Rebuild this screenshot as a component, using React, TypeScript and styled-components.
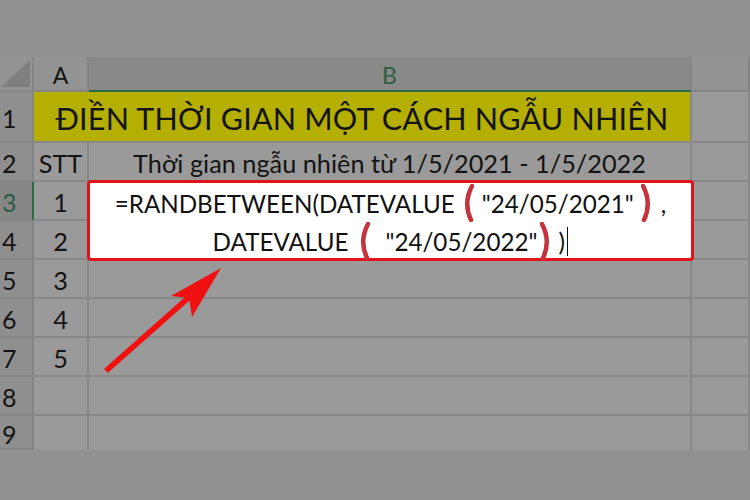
import React from "react";
import styled, { createGlobalStyle } from "styled-components";

const GlobalStyle = createGlobalStyle`
  html, body {
    margin: 0;
    padding: 0;
    background: #919191;
  }
  body {
    width: 750px;
    height: 500px;
    overflow: hidden;
    font-family: Lato, "Noto Sans", sans-serif;
    color: #141414;
  }
`;

const Page = styled.div`
  position: relative;
  width: 750px;
  height: 500px;
  padding-top: 57px;
  box-sizing: border-box;
`;

const Sheet = styled.div`
  display: grid;
  grid-template-columns: 34px 55px 603px 58px;
  grid-template-rows: 35px 51px repeat(7, 39px) 34px;
  background: #9a9a9a;
`;

const Corner = styled.div`
  position: relative;
  background: #939393;
  border-right: 2px solid #858585;
  border-bottom: 2px solid #858585;
  box-sizing: border-box;

  &::after {
    content: "";
    position: absolute;
    right: 2px;
    bottom: 3px;
    width: 29px;
    height: 27px;
    background: #7f7f7f;
    clip-path: polygon(100% 0, 100% 100%, 0 100%);
  }
`;

const ColHead = styled.div<{ $selected?: boolean }>`
  display: flex;
  align-items: center;
  justify-content: center;
  padding-top: 3px;
  box-sizing: border-box;
  font-size: 23px;
  background: ${(p) => (p.$selected ? "#898989" : "#939393")};
  color: ${(p) => (p.$selected ? "#2c5e42" : "#141414")};
  border-right: 2px solid #858585;
  border-bottom: 2px solid ${(p) => (p.$selected ? "#2c6a45" : "#858585")};
`;

const RowHead = styled.div<{ $selected?: boolean }>`
  display: flex;
  align-items: center;
  padding: 3px 0 0 2px;
  box-sizing: border-box;
  font-size: 25px;
  background: ${(p) => (p.$selected ? "#878787" : "#8f8f8f")};
  color: ${(p) => (p.$selected ? "#2c5e42" : "#141414")};
  border-right: 2px solid ${(p) => (p.$selected ? "#2c6a45" : "#858585")};
  border-bottom: 2px solid #858585;
`;

const Cell = styled.div<{ $span?: number; $fill?: string; $last?: boolean }>`
  display: flex;
  align-items: center;
  justify-content: center;
  padding-top: 3px;
  box-sizing: border-box;
  white-space: nowrap;
  font-size: 25.3px;
  grid-column: span ${(p) => p.$span ?? 1};
  background: ${(p) => p.$fill ?? "#9a9a9a"};
  border-right: 2px solid #888888;
  border-bottom: ${(p) => (p.$last ? "none" : "2px solid #888888")};
`;

const Title = styled(Cell)`
  font-size: 30.5px;
  letter-spacing: 0.2px;
`;

const FormulaBox = styled.div`
  position: absolute;
  left: 87px;
  top: 180px;
  width: 607px;
  height: 81px;
  padding-top: 3px;
  box-sizing: border-box;
  border: 3px solid #e3131b;
  border-radius: 4px;
  background: #ffffff;
  display: flex;
  flex-direction: column;
  align-items: center;
  justify-content: center;
  font-size: 24.2px;
  color: #111;
`;

const FormulaLine = styled.div`
  display: flex;
  align-items: center;
  height: 38px;
  white-space: pre;
`;

const Caret = styled.span`
  display: inline-block;
  width: 1.5px;
  height: 29px;
  margin-left: 2px;
  background: #111;
`;

const Overlay = styled.svg`
  position: absolute;
  left: 0;
  top: 0;
  pointer-events: none;
`;

const Paren: React.FC<{ side: "open" | "close"; gap?: [number, number] }> = ({
  side,
  gap = [7, 8],
}) => (
  <svg
    width="12"
    height="38"
    viewBox="0 0 12 38"
    style={{ margin: `0 ${gap[1]}px 0 ${gap[0]}px` }}
  >
    <path
      d={side === "open" ? "M10 2 Q1 19 9 36" : "M2 2 Q11 19 3 36"}
      fill="none"
      stroke="#c5333d"
      strokeWidth="4.5"
      strokeLinecap="round"
    />
  </svg>
);

const rows = ["3", "4", "5", "6", "7", "8", "9"];
const stt = ["1", "2", "3", "4", "5", "", ""];

export default function App() {
  return (
    <Page>
      <GlobalStyle />
      <Sheet>
        <Corner />
        <ColHead>A</ColHead>
        <ColHead $selected>B</ColHead>
        <ColHead />

        <RowHead>1</RowHead>
        <Title $span={2} $fill="#b4af00">
          ĐIỀN THỜI GIAN MỘT CÁCH NGẪU NHIÊN
        </Title>
        <Cell />

        <RowHead>2</RowHead>
        <Cell>STT</Cell>
        <Cell>Thời gian ngẫu nhiên từ 1/5/2021 - 1/5/2022</Cell>
        <Cell />

        {rows.map((r, i) => (
          <React.Fragment key={r}>
            <RowHead $selected={r === "3"}>{r}</RowHead>
            <Cell $last={r === "9"}>{stt[i]}</Cell>
            <Cell $last={r === "9"} />
            <Cell $last={r === "9"} />
          </React.Fragment>
        ))}
      </Sheet>

      <FormulaBox>
        <FormulaLine>
          =RANDBETWEEN(DATEVALUE
          <Paren side="open" />
          "24/05/2021"
          <Paren side="close" />,
        </FormulaLine>
        <FormulaLine>
          DATEVALUE
          <Paren side="open" gap={[10, 15]} />
          "24/05/2022"
          <Paren side="close" gap={[3, 6]} />)
          <Caret />
        </FormulaLine>
      </FormulaBox>

      <Overlay width="750" height="500" viewBox="0 0 750 500">
        <line
          x1="108"
          y1="369"
          x2="195"
          y2="292"
          stroke="#f01010"
          strokeWidth="5.5"
          strokeLinecap="square"
        />
        <polygon points="221,268 171,296 189,298 192,317" fill="#f01010" />
      </Overlay>
    </Page>
  );
}
